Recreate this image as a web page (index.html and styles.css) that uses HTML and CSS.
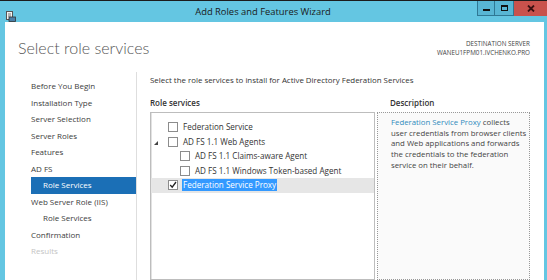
FILE: index.html
```html
<!DOCTYPE html>
<html lang="en">
<head>
    <meta charset="UTF-8">
    <title>Add Roles and Features Wizard</title>
    <link rel="stylesheet" href="styles.css">
</head>
<body>
    <div class="window">
        <div class="titlebar">
            <span class="app-icon">
                <svg width="10" height="11" viewBox="0 0 10 11">
                    <rect x="0.5" y="0.5" width="6" height="8" fill="#f4f4f4" stroke="#555"/>
                    <line x1="2" y1="3" x2="5" y2="3" stroke="#777"/>
                    <line x1="2" y1="5" x2="5" y2="5" stroke="#777"/>
                    <rect x="3" y="6" width="6.5" height="4.5" fill="#4a7fa8" stroke="#333" stroke-width="0.8"/>
                </svg>
            </span>
            <span class="title">Add Roles and Features Wizard</span>
            <div class="win-buttons">
                <span class="win-btn min"><i></i></span>
                <span class="win-btn max"><i></i></span>
                <span class="win-btn close">
                    <svg width="8" height="7" viewBox="0 0 8 7"><path d="M1 0.5 L7 6.5 M7 0.5 L1 6.5" stroke="#3a1010" stroke-width="1.8"/></svg>
                </span>
            </div>
        </div>

        <div class="content">
            <div class="header">
                <h1>Select role services</h1>
                <div class="destination">
                    <div>DESTINATION SERVER</div>
                    <div>WANEU1FPM01.IVCHENKO.PRO</div>
                </div>
            </div>

            <div class="body">
                <ul class="nav">
                    <li>Before You Begin</li>
                    <li>Installation Type</li>
                    <li>Server Selection</li>
                    <li>Server Roles</li>
                    <li>Features</li>
                    <li>AD FS</li>
                    <li class="sub active">Role Services</li>
                    <li>Web Server Role (IIS)</li>
                    <li class="sub">Role Services</li>
                    <li>Confirmation</li>
                    <li class="disabled">Results</li>
                </ul>

                <div class="main">
                    <p class="intro">Select the role services to install for Active Directory Federation Services</p>

                    <div class="panes">
                        <div class="pane">
                            <div class="pane-label">Role services</div>
                            <div class="tree">
                                <div class="row">
                                    <span class="expander"></span>
                                    <span class="check"></span>
                                    <span class="label">Federation Service</span>
                                </div>
                                <div class="row">
                                    <span class="expander"><i class="arrow"></i></span>
                                    <span class="check"></span>
                                    <span class="label">AD FS 1.1 Web Agents</span>
                                </div>
                                <div class="row child">
                                    <span class="expander"></span>
                                    <span class="check"></span>
                                    <span class="label">AD FS 1.1 Claims-aware Agent</span>
                                </div>
                                <div class="row child">
                                    <span class="expander"></span>
                                    <span class="check"></span>
                                    <span class="label">AD FS 1.1 Windows Token-based Agent</span>
                                </div>
                                <div class="row selected">
                                    <span class="expander"></span>
                                    <span class="check">
                                        <svg width="8" height="8" viewBox="0 0 8 8"><path d="M1.2 4 L3.2 6.2 L7 1" fill="none" stroke="#222" stroke-width="1.3"/></svg>
                                    </span>
                                    <span class="label">Federation Service Proxy</span>
                                </div>
                            </div>
                        </div>

                        <div class="pane">
                            <div class="pane-label desc-label">Description</div>
                            <div class="description">
                                <span class="link">Federation Service Proxy</span> collects<br>
                                user credentials from browser clients<br>
                                and Web applications and forwards<br>
                                the credentials to the federation<br>
                                service on their behalf.
                            </div>
                        </div>
                    </div>
                </div>
            </div>
        </div>
    </div>
</body>
</html>
```

FILE: styles.css
```css
body {
    margin: 0;
    width: 547px;
    height: 280px;
    overflow: hidden;
    font-family: "Open Sans", "Noto Sans", sans-serif;
    color: #333;
}

.window {
    height: 280px;
    box-sizing: border-box;
    background-color: #64c6e2;
    border-top: 1px solid #1c1c1c;
    display: flex;
    flex-direction: column;
}

.titlebar {
    height: 21px;
    display: flex;
    align-items: flex-start;
    flex-shrink: 0;
}

.app-icon {
    width: 22px;
    padding: 4px 0 0 6px;
    box-sizing: border-box;
}

.title {
    flex: 1;
    text-align: center;
    padding-left: 27px;
    font-size: 9.4px;
    line-height: 21px;
    color: #1a1a1a;
}

.win-buttons {
    display: flex;
    width: 70px;
}

.win-btn {
    height: 15px;
    display: flex;
    align-items: center;
    justify-content: center;
    box-sizing: border-box;
}

.win-btn.min,
.win-btn.max {
    width: 18px;
    background-color: #58b6d4;
    border: 1px solid #2f7894;
    border-top: none;
}

.win-btn.max {
    width: 19px;
    border-left: none;
}

.win-btn.min i {
    width: 7px;
    height: 2px;
    margin-top: 4px;
    background-color: #111;
}

.win-btn.max i {
    width: 5px;
    height: 3px;
    border: 1.5px solid #111;
    border-top-width: 2px;
}

.win-btn.close {
    width: 33px;
    background-color: #c9524c;
}

.content {
    flex: 1;
    margin: 0 3px 0 5px;
    background-color: #fff;
    display: flex;
    flex-direction: column;
    min-height: 0;
    overflow: hidden;
}

.header {
    height: 50px;
    display: flex;
    justify-content: space-between;
    padding: 0 14px 0 13px;
    flex-shrink: 0;
}

.header h1 {
    margin: 14px 0 0;
    font-family: Lato, "Open Sans", sans-serif;
    font-size: 16px;
    font-weight: 300;
    line-height: 24px;
    color: #555;
}

.destination {
    margin-top: 17px;
    text-align: right;
    font-size: 6.3px;
    line-height: 9px;
    color: #444;
}

.body {
    flex: 1;
    display: flex;
    min-height: 0;
    overflow: hidden;
}

.nav {
    list-style: none;
    margin: 0;
    padding: 6px 0 0 26px;
    width: 132px;
    box-sizing: border-box;
    border-right: 1px solid #dedede;
    font-size: 8px;
    color: #3c3c3c;
}

.nav li {
    height: 16.5px;
    line-height: 16.5px;
}

.nav li.sub {
    padding-left: 12px;
}

.nav li.active {
    background-color: #1b6fb6;
    color: #fff;
}

.nav li.disabled {
    color: #c4c4c4;
}

.main {
    flex: 1;
    padding-left: 13px;
}

.intro {
    margin: 2px 0 0;
    font-size: 7.9px;
    line-height: 12px;
}

.panes {
    display: grid;
    grid-template-columns: 225px 153px;
    column-gap: 2px;
    margin-top: 11px;
}

.pane-label {
    font-size: 8px;
    font-weight: 600;
    line-height: 12px;
    margin-bottom: 3px;
    color: #333;
}

.desc-label {
    padding-left: 13px;
}

.tree {
    height: 168px;
    box-sizing: border-box;
    border: 1px solid #bdbdbd;
    box-shadow: inset 1px 0 #e2e2e2;
    padding-top: 7px;
    font-size: 8.1px;
}

.row {
    height: 14.5px;
    display: flex;
    align-items: center;
    padding-left: 3px;
}

.row.child {
    padding-left: 15px;
}

.row.selected {
    background-color: #e6e6e6;
}

.expander {
    width: 14px;
    height: 100%;
    display: flex;
    align-items: center;
}

.arrow {
    width: 0;
    height: 0;
    border-bottom: 4px solid #444;
    border-left: 4px solid transparent;
    margin-top: 2px;
}

.check {
    width: 8px;
    height: 8px;
    border: 1px solid #8c8c8c;
    background-color: #fff;
    margin-right: 4px;
    display: flex;
    align-items: center;
    justify-content: center;
}

.check svg {
    display: block;
}

.label {
    line-height: 12px;
    padding: 0 1px;
}

.row.selected .label {
    background-color: #3399ff;
    color: #fff;
}

.description {
    height: 168px;
    box-sizing: border-box;
    border: 1px dotted #999;
    background-color: #fafafa;
    padding: 4px 0 0 13px;
    font-size: 7.8px;
    line-height: 10.7px;
    color: #444;
}

.link {
    color: #2f8bbd;
}
```
